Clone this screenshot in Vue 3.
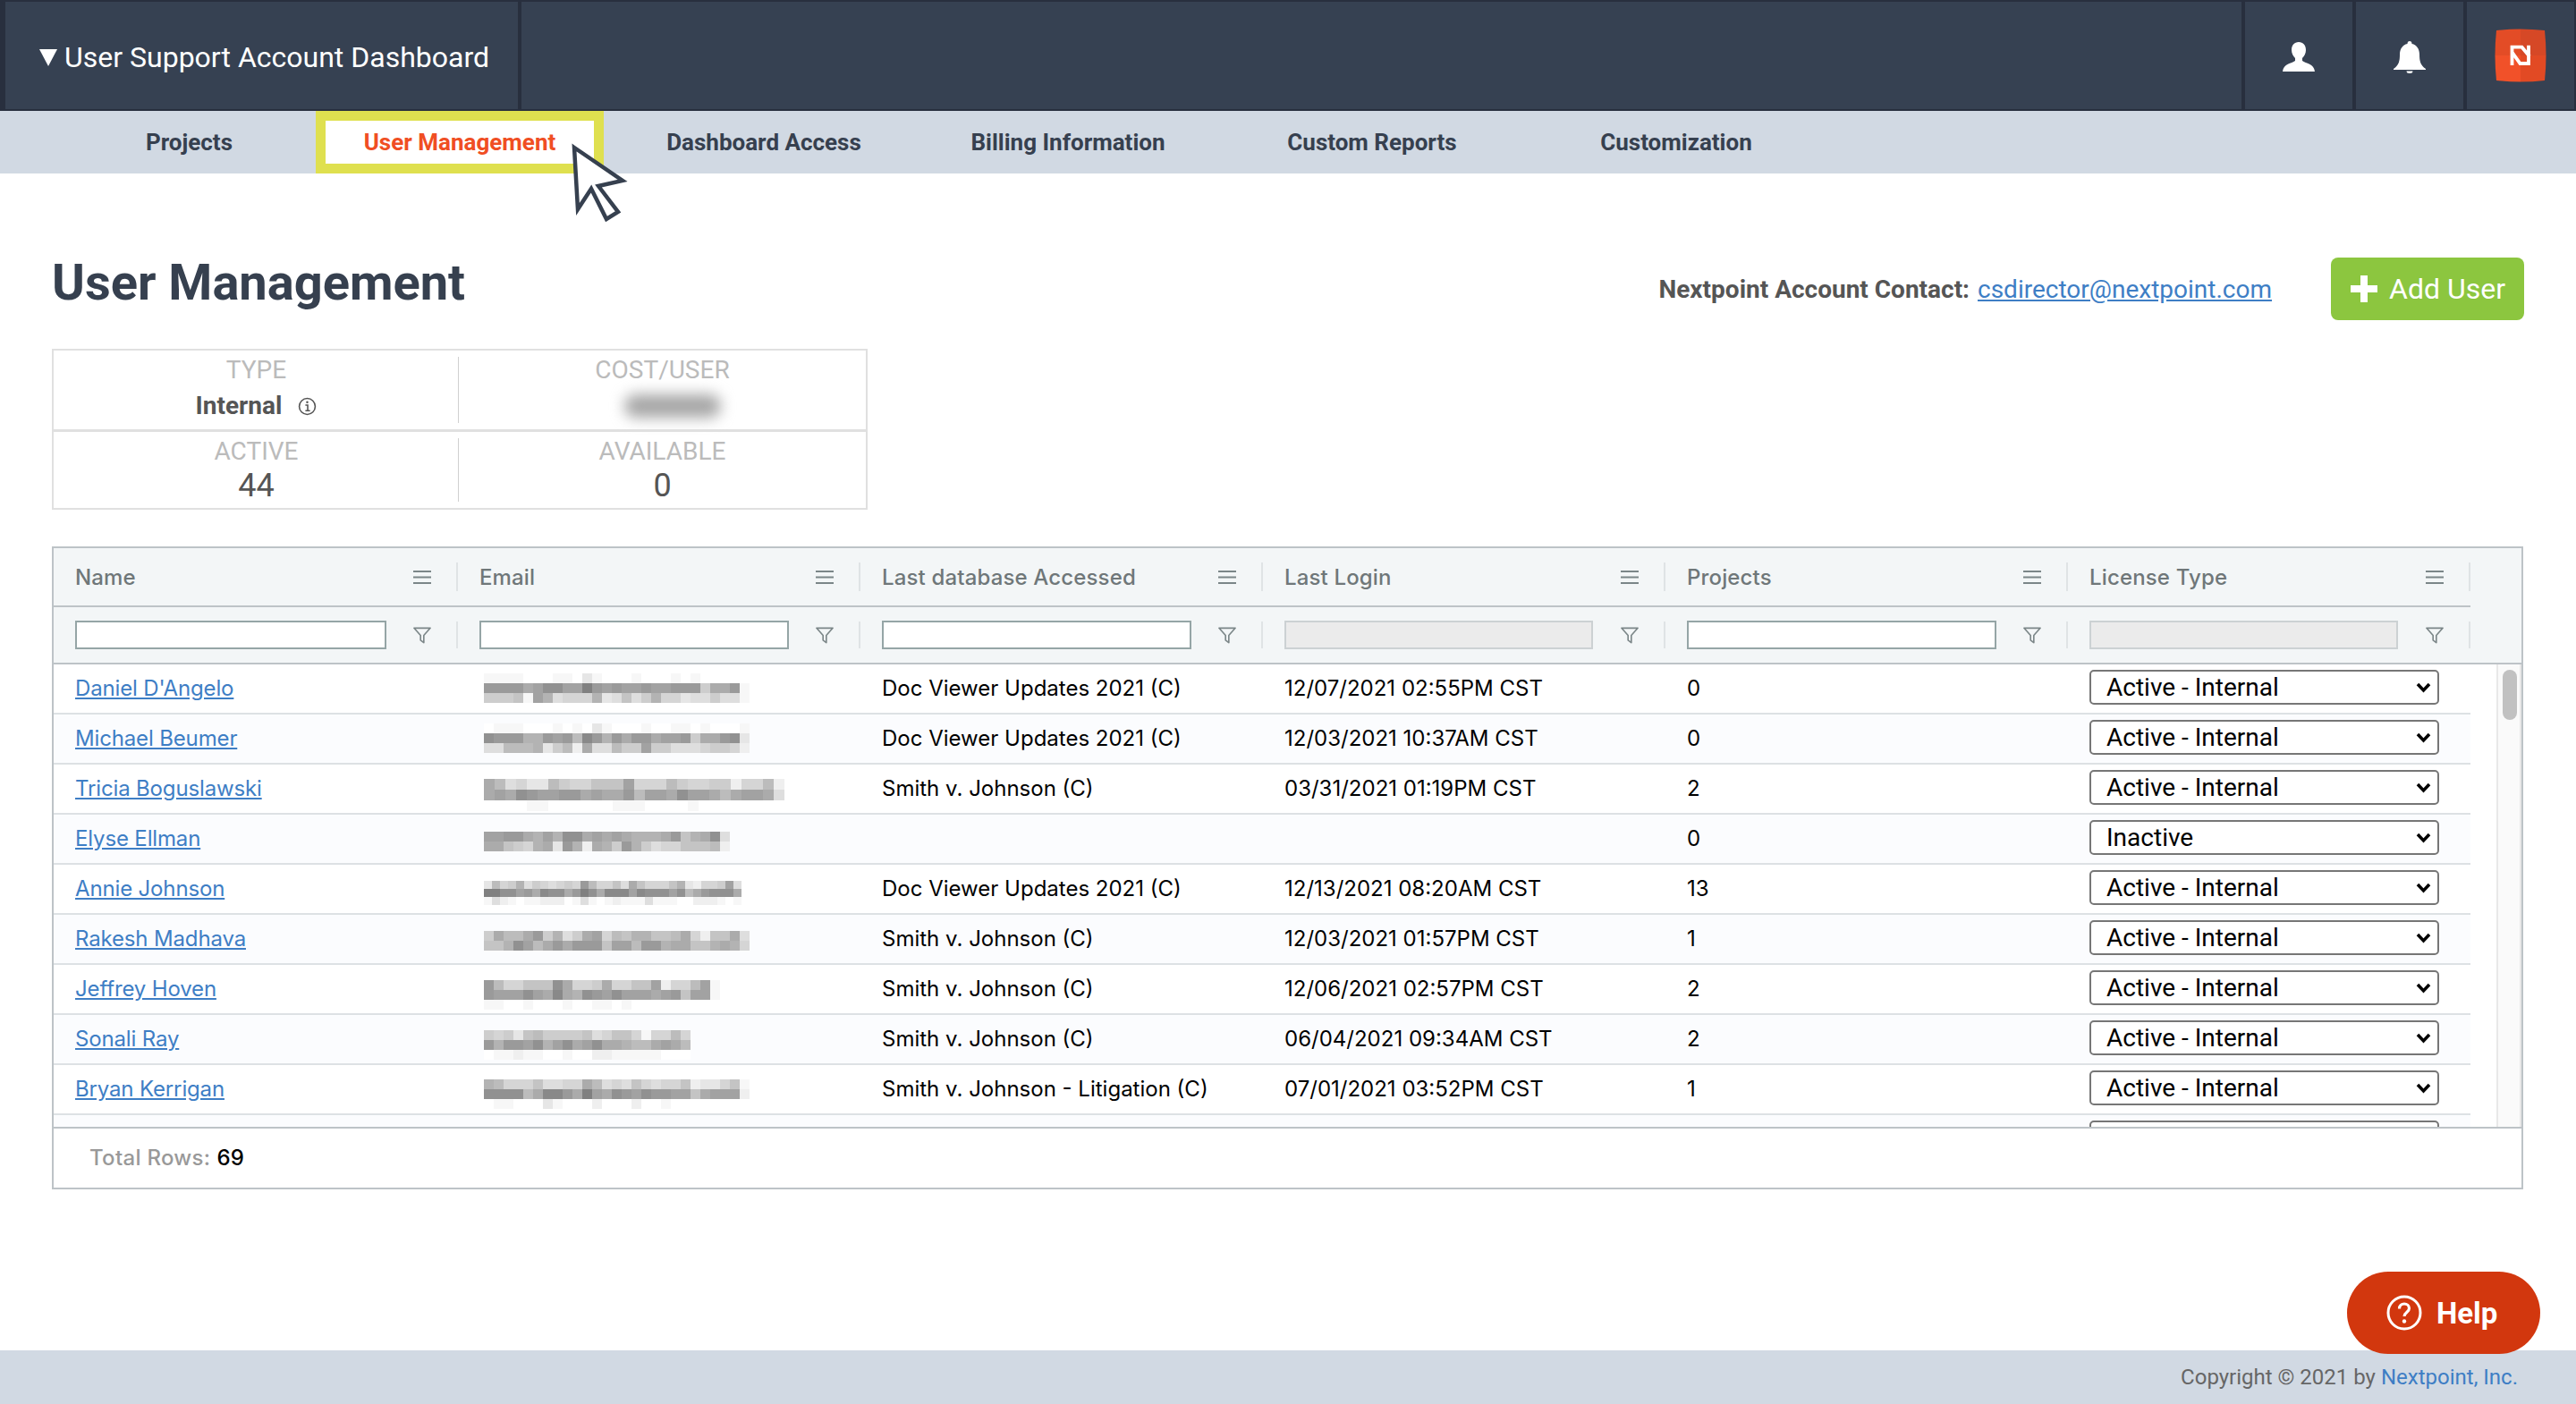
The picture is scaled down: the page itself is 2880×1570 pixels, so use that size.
<template>
  <div class="page">
    <header class="topbar">
      <div class="top-title"><span class="caret"></span>User Support Account Dashboard</div>
      <div class="top-spacer"></div>
      <div class="top-cell">
        <svg width="36" height="33" viewBox="0 0 36 33"><path d="M18 0c-5 0-8 3.500-8 9 0 4 2 7 4 9v3c-4 3-13 3-14 12h36c-1-9-10-9-14-12v-3c2-2 4-5 4-9 0-5.500-3-9-8-9z" fill="#fff" /></svg>
      </div>
      <div class="top-cell">
        <svg width="36" height="36" viewBox="0 0 36 36"><path d="M15.500 3a2.500 3 0 0 1 5 0C26 4 29 9 29 15c0 7 1 12 7 16v1H0v-1c6-4 7-9 7-16C7 9 10 4 15.500 3zM14.500 33.500h7a3.500 2.500 0 0 1-7 0z" fill="#fff" /></svg>
      </div>
      <div class="top-cell top-cell-last">
        <svg width="60" height="60" viewBox="0 0 60 60">
          <clipPath id="logo-shape"><path d="M3 2Q30-1 57 2 60 30 57 58 30 61 3 58 0 30 3 2z" /></clipPath>
          <g clip-path="url(#logo-shape)">
            <rect width="30" height="30" fill="#e34c26" />
            <rect x="30" width="30" height="30" fill="#d64826" />
            <rect y="30" width="30" height="30" fill="#f15129" />
            <rect x="30" y="30" width="30" height="30" fill="#e24a24" />
          </g>
          <path d="M20.500 41V20.700H31.500L40 31M39 18.700V39H29.500L21 27" fill="none" stroke="#fff" stroke-width="3.800" />
        </svg>
      </div>
    </header>

    <nav class="tabs">
      <a v-for="tab in tabs" :key="tab" class="tab" :class="{ active: tab === 'User Management' }">{{ tab }}</a>
      <svg class="cursor" width="70" height="96" viewBox="0 0 70 96">
        <path d="M5 6 59 43 32 49 54 78 41 86 24 52 9 75z" fill="#fff" stroke="#36404f" stroke-width="4.500" />
      </svg>
    </nav>

    <main class="content">
      <div class="title-row">
        <h1>User Management</h1>
        <div class="contact">
          <span class="contact-label">Nextpoint Account Contact:</span>
          <a class="link">csdirector@nextpoint.com</a>
        </div>
        <button class="add-btn">
          <svg width="30" height="30" viewBox="0 0 30 30"><path d="M11 0h8v11h11v8H19v11h-8V19H0v-8h11z" fill="#fff" /></svg>
          Add User
        </button>
      </div>

      <div class="stats">
        <div class="stat">
          <div class="stat-label">TYPE</div>
          <div class="stat-type">
            Internal
            <svg width="21" height="21" viewBox="0 0 20 20"><circle cx="10" cy="10" r="8.500" fill="none" stroke="#555" stroke-width="1.500" /><path d="M8 8.500h2.500V14M8 14.500h5" fill="none" stroke="#555" stroke-width="1.500" /><circle cx="10" cy="5.500" r="1.200" fill="#555" /></svg>
          </div>
        </div>
        <div class="stat">
          <div class="stat-label">COST/USER</div>
          <div class="stat-blur-wrap"><div class="stat-blur"></div></div>
        </div>
        <div class="stat">
          <div class="stat-label">ACTIVE</div>
          <div class="stat-value">44</div>
        </div>
        <div class="stat">
          <div class="stat-label">AVAILABLE</div>
          <div class="stat-value">0</div>
        </div>
      </div>

      <section class="grid">
        <div class="grid-head">
          <div class="head-row">
            <div v-for="col in columns" :key="col.name" class="head-cell">
              <span>{{ col.name }}</span>
              <svg class="menu-icon" width="20" height="15" viewBox="0 0 20 15"><path d="M0 1h20M0 7.500h20M0 14h20" stroke="#7b8688" stroke-width="1.800" /></svg>
            </div>
          </div>
          <div class="filter-row">
            <div v-for="col in columns" :key="col.name" class="filter-cell">
              <input type="text" :disabled="col.disabled" />
              <svg width="20" height="19" viewBox="0 0 22 20"><path d="M1 1h20l-8 9v9l-4-3v-6z" fill="none" stroke="#7b8688" stroke-width="1.800" stroke-linejoin="round" /></svg>
            </div>
          </div>
        </div>

        <div class="grid-body">
          <div class="rows">
            <div v-for="(user, i) in users" :key="i" class="row" :class="{ odd: i % 2 === 1 }">
              <div class="cell"><a class="link">{{ user.name }}</a></div>
              <div class="cell cell-mosaic">
                <div v-if="user.mosaic" class="mosaic" :style="{ paddingTop: user.mosaic.top + 'px' }">
                  <div v-for="(line, l) in user.mosaic.lines" :key="l" class="mosaic-line">
                    <i
                      v-for="(c, k) in line"
                      :key="k"
                      :style="{ width: user.mosaic.size + 'px', height: user.mosaic.size + 'px', background: shade(c) }"
                    ></i>
                  </div>
                </div>
              </div>
              <div class="cell">{{ user.database }}</div>
              <div class="cell">{{ user.login }}</div>
              <div class="cell">{{ user.projects }}</div>
              <div class="cell">
                <div class="select-wrap">
                  <select :value="user.license">
                    <option>Active - Internal</option>
                    <option>Inactive</option>
                  </select>
                  <svg width="17" height="12" viewBox="0 0 17 12"><path d="M2 2 8.500 9 15 2" fill="none" stroke="#000" stroke-width="3.500" /></svg>
                </div>
              </div>
            </div>
          </div>
          <div class="scrollbar"><div class="thumb"></div></div>
        </div>

        <div class="grid-foot">Total Rows: <b>69</b></div>
      </section>
    </main>

    <button class="help-btn">
      <svg width="40" height="40" viewBox="0 0 40 40">
        <circle cx="20" cy="20" r="18" fill="none" stroke="#fff" stroke-width="3" />
        <path d="M14.500 15.500c0-3.500 2.500-5.500 5.500-5.500s5.500 2 5.500 5c0 4.500-5.500 4.500-5.500 9" fill="none" stroke="#fff" stroke-width="3.200" />
        <circle cx="20" cy="29.500" r="2.200" fill="#fff" />
      </svg>
      Help
    </button>

    <footer class="footer">Copyright © 2021 by <a>Nextpoint, Inc.</a></footer>
  </div>
</template>

<script setup>
const tabs = [
  "Projects",
  "User Management",
  "Dashboard Access",
  "Billing Information",
  "Custom Reports",
  "Customization",
];

const columns = [
  { name: "Name" },
  { name: "Email" },
  { name: "Last database Accessed" },
  { name: "Last Login", disabled: true },
  { name: "Projects" },
  { name: "License Type", disabled: true },
];

const users = [
  {
    name: "Daniel D'Angelo",
    database: "Doc Viewer Updates 2021 (C)",
    login: "12/07/2021 02:55PM CST",
    projects: "0",
    license: "Active - Internal",
    mosaic: {
      top: 10,
      size: 11,
      lines: ["eeeefffeefcefffefffefefffff", "33335422440343443443339553e", "9998e46baaa6cb8b96aacbb9bbe"],
    },
  },
  {
    name: "Michael Beumer",
    database: "Doc Viewer Updates 2021 (C)",
    login: "12/03/2021 10:37AM CST",
    projects: "0",
    license: "Active - Internal",
    mosaic: {
      top: 10,
      size: 11,
      lines: ["feeefffefefcefffeffeefefffe", "23336634371363533544395532c", "bb7776c97d5bb799499bbba99ad"],
    },
  },
  {
    name: "Tricia Boguslawski",
    database: "Smith v. Johnson (C)",
    login: "03/31/2021 01:19PM CST",
    projects: "2",
    license: "Active - Internal",
    mosaic: {
      top: 16,
      size: 12,
      lines: ["57bacc79aa8884aaa79aa99daa7d", "545234433545537445244575445b", "ffffeeffffffeeeffffeffffffff"],
    },
  },
  {
    name: "Elyse Ellman",
    database: "",
    login: "",
    projects: "0",
    license: "Inactive",
    mosaic: {
      top: 19,
      size: 11,
      lines: ["443356462254545666538652b", "5589a65c36d569369baa8887d"],
    },
  },
  {
    name: "Annie Johnson",
    database: "Doc Viewer Updates 2021 (C)",
    login: "12/13/2021 08:20AM CST",
    projects: "13",
    license: "Active - Internal",
    mosaic: {
      top: 18,
      size: 9,
      lines: ["c7a96b9aba9a37aa8b58aaa86cdaa94b", "00224351225302511141222427532225", "ebdefeedddfebefedeeebeeeffdddefe"],
    },
  },
  {
    name: "Rakesh Madhava",
    database: "Smith v. Johnson (C)",
    login: "12/03/2021 01:57PM CST",
    projects: "1",
    license: "Active - Internal",
    mosaic: {
      top: 18,
      size: 11,
      lines: ["95775396b954a78668875ad885b", "88624753533384473365588656a"],
    },
  },
  {
    name: "Jeffrey Hoven",
    database: "Smith v. Johnson (C)",
    login: "12/06/2021 02:57PM CST",
    projects: "2",
    license: "Active - Internal",
    mosaic: {
      top: 17,
      size: 11,
      lines: ["37aa88825aa95aa884daa74e", "34442451562342444543844e", "eeffefffeffeefefffffffff"],
    },
  },
  {
    name: "Sonali Ray",
    database: "Smith v. Johnson (C)",
    login: "06/04/2021 09:34AM CST",
    projects: "2",
    license: "Active - Internal",
    mosaic: {
      top: 17,
      size: 11,
      lines: ["9a9c8799998ba88aeaa7a", "363342642542556775457", "feedeeffeffddeeeeefff"],
    },
  },
  {
    name: "Bryan Kerrigan",
    database: "Smith v. Johnson - Litigation (C)",
    login: "07/01/2021 03:52PM CST",
    projects: "1",
    license: "Active - Internal",
    mosaic: {
      top: 16,
      size: 11,
      lines: ["67aaa8bbaa57bab8abaa8dcca8e", "22227511350452342334485444d", "feefffcefffdfffdffeffffffff"],
    },
  },
  { name: "", database: "", login: "", projects: "", license: "Active - Internal" },
];

// redacted emails are stored as one hex digit per block
const shade = (c) => {
  const v = Math.round(128 + parseInt(c, 16) * 8.5);
  return `rgb(${v},${v},${v})`;
};
</script>

<style>
body {
  margin: 0;
  background: #fff;
}
</style>

<style scoped>
.page {
  position: relative;
  display: flex;
  flex-direction: column;
  min-height: 1570px;
  font-family: Roboto, "Liberation Sans", sans-serif;
  color: #000;
}

.topbar {
  display: flex;
  height: 124px;
  box-sizing: border-box;
  background: #282f3e;
  padding: 2px 2px 2px 6px;
  gap: 4px;
}

.top-title {
  display: flex;
  align-items: center;
  width: 573px;
  padding: 4px 0 0 38px;
  box-sizing: border-box;
  background: #364152;
  color: #fff;
  font-size: 32px;
}

.caret {
  width: 0;
  height: 0;
  margin-right: 8px;
  border-left: 10px solid transparent;
  border-right: 10px solid transparent;
  border-top: 19px solid #fff;
}

.top-spacer {
  flex: 1;
  background: #364152;
}

.top-cell {
  display: flex;
  align-items: center;
  justify-content: center;
  width: 120px;
  padding-top: 3px;
  box-sizing: border-box;
  background: #364152;
}

.top-cell-last {
  padding-top: 0;
}

.tabs {
  position: relative;
  display: grid;
  grid-template-columns: 265px repeat(5, 340px);
  height: 70px;
  padding-left: 79px;
  background: #d1d9e3;
}

.tab {
  display: flex;
  align-items: center;
  justify-content: center;
  font-size: 26px;
  font-weight: 700;
  color: #36404f;
}

.tab.active {
  margin: 0 9px 0 9px;
  border: 11px solid #dfe04f;
  background: #fff;
  color: #f04e23;
}

.cursor {
  position: absolute;
  left: 637px;
  top: 35px;
}

.content {
  padding: 94px 58px 0 58px;
}

.title-row {
  display: flex;
  align-items: flex-start;
  height: 70px;
}

h1 {
  margin: -1px auto 0 0;
  font-size: 56px;
  line-height: 58px;
  font-weight: 700;
  color: #36404f;
}

.contact {
  margin: 17px 66px 0 0;
  font-size: 28px;
  line-height: 38px;
}

.contact-label {
  font-weight: 700;
  color: #555;
  margin-right: 9px;
}

.link {
  color: #3e7ec5;
  text-decoration: underline;
}

.add-btn {
  display: flex;
  align-items: center;
  gap: 13px;
  width: 216px;
  height: 70px;
  padding: 0 0 0 22px;
  border: 0;
  border-radius: 8px;
  background: #8cc63f;
  color: #fff;
  font-family: inherit;
  font-size: 32px;
}

.stats {
  display: grid;
  grid-template-columns: 453px 455px;
  width: 908px;
  margin-top: 32px;
  border: 2px solid #e0e0e0;
}

.stat {
  position: relative;
  display: flex;
  flex-direction: column;
  align-items: center;
  height: 88px;
  padding-top: 5px;
  box-sizing: border-box;
}

.stat:nth-child(n + 3) {
  border-top: 3px solid #e0e0e0;
}

.stat:nth-child(odd)::after {
  content: "";
  position: absolute;
  right: 0;
  top: 7px;
  bottom: 7px;
  width: 1px;
  background: #d0d0d0;
}

.stat-label {
  font-size: 28px;
  line-height: 34px;
  color: #bbb;
}

.stat-type {
  display: flex;
  align-items: center;
  gap: 18px;
  margin-top: 6px;
  font-size: 28px;
  line-height: 34px;
  font-weight: 700;
  color: #555;
}

.stat-value {
  font-size: 36px;
  line-height: 42px;
  color: #555;
}

.stat-blur-wrap {
  padding: 10px 0 0 22px;
}

.stat-blur {
  width: 108px;
  height: 26px;
  border-radius: 13px;
  background: #a6a6a6;
  filter: blur(8px);
}

.grid {
  width: 2759px;
  margin-top: 41px;
  border: 2px solid #bdc3c7;
  box-sizing: content-box;
  font-family: Inter, Roboto, sans-serif;
  font-size: 24px;
}

.grid-head {
  background: #f3f6f7;
  border-bottom: 2px solid #bdc3c7;
}

.head-row,
.filter-row,
.row {
  display: grid;
  grid-template-columns: 452px repeat(5, 450px);
  width: 2702px;
}

.head-row {
  height: 64px;
  border-bottom: 2px solid #bdc3c7;
  font-size: 24px;
  font-weight: 500;
  letter-spacing: 0.15px;
  color: #6f7779;
}

.filter-row {
  height: 62px;
}

.head-cell,
.filter-cell {
  position: relative;
  display: flex;
  align-items: center;
  justify-content: space-between;
  padding: 0 30px 0 24px;
}

.head-cell::after,
.filter-cell::after {
  content: "";
  position: absolute;
  right: 0;
  top: 16px;
  bottom: 16px;
  width: 2px;
  background: #dfe3e5;
}

.filter-cell input {
  width: 346px;
  height: 32px;
  padding: 0;
  box-sizing: border-box;
  border: 2px solid #95a5a6;
  background: #fff;
}

.filter-cell:first-child input {
  width: 348px;
}

.filter-cell input:disabled {
  width: 345px;
  border-color: #ccd1d3;
  background: #ebebeb;
}

.grid-body {
  display: flex;
  height: 517px;
  overflow: hidden;
}

.rows {
  width: 2731px;
}

.row {
  height: 56px;
  box-sizing: border-box;
  border-bottom: 2px solid #dde1e4;
  background: #fff;
}

.row.odd {
  background: #fbfcfe;
}

.row .link {
  letter-spacing: -0.15px;
}

.cell {
  display: flex;
  align-items: center;
  padding: 0 0 2px 24px;
}

.cell-mosaic {
  align-items: flex-start;
  padding-left: 29px;
}

.mosaic-line {
  display: flex;
}

.mosaic-line i {
  display: block;
  flex: none;
}

.select-wrap {
  position: relative;
  margin-top: -1px;
}

.select-wrap select {
  display: block;
  width: 391px;
  height: 39px;
  padding: 0 0 0 17px;
  box-sizing: border-box;
  appearance: none;
  border: 2px solid #767676;
  border-radius: 5px;
  background: #fff;
  font-family: Roboto, sans-serif;
  font-size: 28px;
  color: #000;
}

.select-wrap svg {
  position: absolute;
  right: 9px;
  top: 14px;
}

.scrollbar {
  width: 28px;
  padding: 6px 0 0 5px;
  box-sizing: border-box;
  border-left: 2px solid #e8e8e8;
  border-right: 2px solid #e8e8e8;
  background: #fafafa;
}

.thumb {
  width: 16px;
  height: 56px;
  border-radius: 8px;
  background: #c1c1c1;
}

.grid-foot {
  display: flex;
  align-items: center;
  gap: 7px;
  height: 68px;
  padding: 0 0 2px 40px;
  box-sizing: border-box;
  border-top: 2px solid #bdc3c7;
  font-size: 24px;
  font-weight: 500;
  letter-spacing: 0.3px;
  color: #999;
}

.grid-foot b {
  font-weight: 500;
  color: #000;
}

.help-btn {
  position: absolute;
  right: 40px;
  bottom: 56px;
  display: flex;
  align-items: center;
  gap: 16px;
  width: 216px;
  height: 92px;
  padding: 0 0 0 44px;
  box-sizing: border-box;
  border: 0;
  border-radius: 46px;
  background: #d2370e;
  color: #fff;
  font-family: inherit;
  font-size: 33px;
  font-weight: 700;
}

.footer {
  margin-top: auto;
  height: 60px;
  padding-right: 65px;
  box-sizing: border-box;
  background: #d1d9e3;
  font-size: 24px;
  line-height: 60px;
  text-align: right;
  color: #666;
}

.footer a {
  color: #3e7ec5;
}
</style>
